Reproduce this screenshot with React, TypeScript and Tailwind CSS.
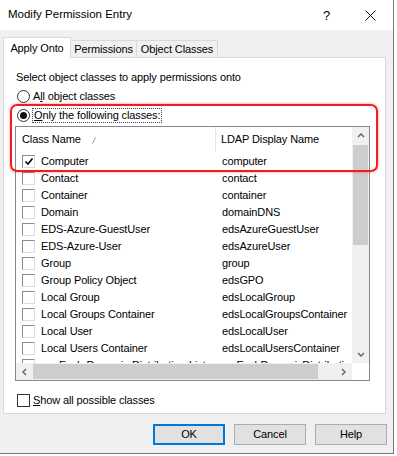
import React from "react";

const rows: [string, string, boolean][] = [
  ["Computer", "computer", true],
  ["Contact", "contact", false],
  ["Container", "container", false],
  ["Domain", "domainDNS", false],
  ["EDS-Azure-GuestUser", "edsAzureGuestUser", false],
  ["EDS-Azure-User", "edsAzureUser", false],
  ["Group", "group", false],
  ["Group Policy Object", "edsGPO", false],
  ["Local Group", "edsLocalGroup", false],
  ["Local Groups Container", "edsLocalGroupsContainer", false],
  ["Local User", "edsLocalUser", false],
  ["Local Users Container", "edsLocalUsersContainer", false],
  ["ms-Exch-Dynamic-Distribution-List", "msExchDynamicDistributionList", false],
];

function ListCheck({ checked }: { checked: boolean }) {
  return (
    <div className="w-[13px] h-[13px] shrink-0 bg-white border-t border-l border-[#8b8b8b] border-r border-b border-r-[#dcdcdc] border-b-[#dcdcdc] relative">
      {checked && (
        <svg className="absolute left-[1px] top-[1px]" width="10" height="10" viewBox="0 0 10 10">
          <polyline points="1.5,4.5 4,7 8.5,1.5" fill="none" stroke="#000" strokeWidth="1.6" />
        </svg>
      )}
    </div>
  );
}

function Chevron({ dir }: { dir: "up" | "down" | "left" | "right" }) {
  const pts: Record<string, string> = {
    up: "1,5 4,2 7,5",
    down: "1,2 4,5 7,2",
    left: "5,1 2,4 5,7",
    right: "2,1 5,4 2,7",
  };
  return (
    <svg width="8" height="8" viewBox="0 0 8 8">
      <polyline points={pts[dir]} fill="none" stroke="#606060" strokeWidth="1.4" />
    </svg>
  );
}

export default function App() {
  return (
    <div className="w-[397px] h-[456px] bg-white relative overflow-hidden font-['Liberation_Sans',Arial,sans-serif] text-[11px] tracking-[-0.12px] text-black">
      <div className="w-[394px] h-[454px] flex flex-col border-r border-b border-[#7a7a7a]">
        {/* Title bar */}
        <div className="h-[30px] bg-white flex items-center shrink-0">
          <span className="pl-[8px] text-[11.5px] tracking-normal">Modify Permission Entry</span>
          <span className="ml-auto mr-[35px] text-[13px] leading-none">?</span>
          <svg className="mr-[17px]" width="11" height="11" viewBox="0 0 11 11">
            <line x1="0.5" y1="0.5" x2="10.5" y2="10.5" stroke="#111" strokeWidth="1" />
            <line x1="10.5" y1="0.5" x2="0.5" y2="10.5" stroke="#111" strokeWidth="1" />
          </svg>
        </div>

        {/* Body */}
        <div className="flex-1 bg-[#f0f0f0] flex flex-col pt-[7px] pl-[3px]">
          {/* Tabs */}
          <div className="flex items-end h-[21px] -mb-px relative z-10">
            <div className="w-[68px] h-[21px] bg-white border border-b-0 border-[#d9d9d9] flex items-center justify-center">
              Apply Onto
            </div>
            <div className="w-[66px] h-[18px] bg-[#f0f0f0] border border-l-0 border-[#d9d9d9] flex items-center justify-center">
              Permissions
            </div>
            <div className="w-[81px] h-[18px] bg-[#f0f0f0] border border-l-0 border-[#d9d9d9] flex items-center justify-center">
              Object Classes
            </div>
          </div>

          {/* Panel */}
          <div className="w-[383px] h-[357px] bg-white border border-[#d9d9d9] flex flex-col">
            <div className="mt-[11px] ml-[12px] h-[16px] leading-[16px]">
              Select object classes to apply permissions onto
            </div>
            <div className="ml-[13px] mt-[3px] h-[16px] flex items-center gap-[3px]">
              <div className="w-[13px] h-[13px] rounded-full border border-[#333] bg-white" />
              <span>
                A<span className="underline">l</span>l object classes
              </span>
            </div>
            <div className="ml-[13px] mt-[3px] h-[16px] flex items-center gap-[2px]">
              <div className="w-[13px] h-[13px] rounded-full border border-[#333] bg-white flex items-center justify-center">
                <div className="w-[7px] h-[7px] rounded-full bg-[#111]" />
              </div>
              <span className="border border-dotted border-[#444] px-[1px] leading-[13px]">
                <span className="underline">O</span>nly the following classes:
              </span>
            </div>

            {/* List view */}
            <div className="ml-[11px] mt-[3px] w-[355px] h-[255px] border border-[#828790] flex bg-white">
              <div className="w-[336px] flex flex-col">
                {/* Header */}
                <div className="h-[25px] flex shrink-0">
                  <div className="w-[199px] pl-[6px] flex items-center relative">
                    Class Name
                    <svg className="absolute left-[76px] top-[10px]" width="4" height="7" viewBox="0 0 4 7">
                      <line x1="3.5" y1="0.5" x2="0.5" y2="6.5" stroke="#9a9a9a" strokeWidth="1" />
                    </svg>
                  </div>
                  <div className="w-px bg-[#e5e5e5]" />
                  <div className="flex-1 pl-[5px] flex items-center">LDAP Display Name</div>
                </div>
                {/* Rows */}
                <div className="h-[211px] overflow-hidden pt-px">
                  {rows.map(([name, ldap, checked]) => (
                    <div key={name} className="h-[17px] flex items-center whitespace-nowrap">
                      <div className="w-[200px] pl-[6px] flex items-center gap-[6px] overflow-hidden">
                        <ListCheck checked={checked} />
                        <span>{name}</span>
                      </div>
                      <div className="flex-1 pl-[6px] overflow-hidden">{ldap}</div>
                    </div>
                  ))}
                </div>
                {/* Horizontal scrollbar */}
                <div className="h-[17px] bg-[#f0f0f0] flex items-stretch">
                  <div className="w-[17px] flex items-center justify-center">
                    <Chevron dir="left" />
                  </div>
                  <div className="flex-1 py-px">
                    <div className="h-full w-[285px] bg-[#cdcdcd]" />
                  </div>
                  <div className="w-[17px] flex items-center justify-center">
                    <Chevron dir="right" />
                  </div>
                </div>
              </div>
              {/* Vertical scrollbar */}
              <div className="w-[17px] flex flex-col">
                <div className="h-[236px] bg-[#f0f0f0] flex flex-col">
                  <div className="h-[17px] flex items-center justify-center">
                    <Chevron dir="up" />
                  </div>
                  <div className="flex-1 px-px">
                    <div className="mt-px h-[100px] bg-[#cdcdcd]" />
                  </div>
                  <div className="h-[17px] flex items-center justify-center">
                    <Chevron dir="down" />
                  </div>
                </div>
                <div className="flex-1 bg-white" />
              </div>
            </div>

            <div className="ml-[13px] mt-[11px] h-[16px] flex items-center gap-[3px]">
              <div className="w-[13px] h-[13px] border border-[#333] bg-white" />
              <span>
                <span className="underline">S</span>how all possible classes
              </span>
            </div>
          </div>

          {/* Buttons */}
          <div className="mt-[10px] ml-[150px] flex gap-[9px]">
            <div className="w-[72px] h-[21px] bg-[#e1e1e1] border-2 border-[#0078d7] flex items-center justify-center">
              OK
            </div>
            <div className="w-[72px] h-[21px] bg-[#e1e1e1] border border-[#adadad] flex items-center justify-center">
              Cancel
            </div>
            <div className="w-[72px] h-[21px] bg-[#e1e1e1] border border-[#adadad] flex items-center justify-center">
              Help
            </div>
          </div>
        </div>
      </div>

      {/* Red annotation box */}
      <div className="absolute left-[10px] top-[104px] w-[368px] h-[68px] border-2 border-[#f21c1c] rounded-[7px] shadow-[0_0_3px_rgba(255,0,0,0.45)] pointer-events-none" />
    </div>
  );
}
